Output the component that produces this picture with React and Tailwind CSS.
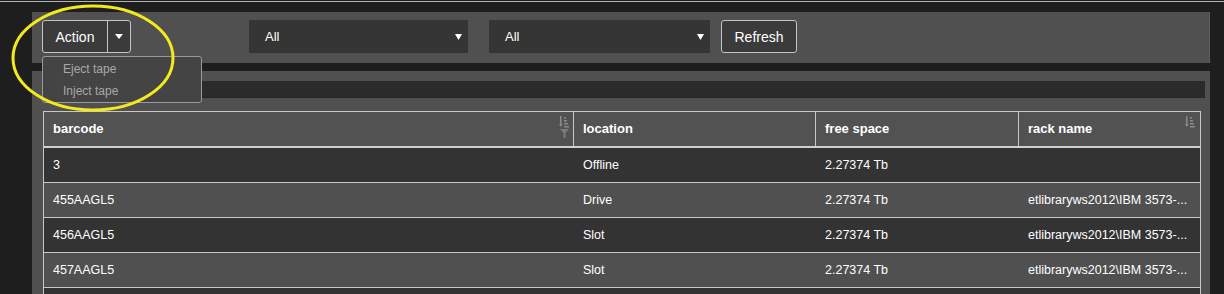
import React from "react";

const SortIcon = () => (
  <svg width="10" height="12" viewBox="0 0 10 12" className="block">
    <rect x="1" y="0" width="1.5" height="10" fill="#8a8a8a" />
    <path d="M0 8 L1.75 11 L3.5 8 Z" fill="#8a8a8a" />
    <rect x="5" y="1" width="2" height="1.5" fill="#8a8a8a" />
    <rect x="5" y="4" width="3" height="1.5" fill="#8a8a8a" />
    <rect x="5" y="7" width="4" height="1.5" fill="#8a8a8a" />
    <rect x="5" y="10" width="5" height="1.5" fill="#8a8a8a" />
  </svg>
);

const FilterIcon = () => (
  <svg width="9" height="9" viewBox="0 0 9 9" className="block">
    <path d="M0 0 H9 L5.5 4 V9 H3.5 V4 Z" fill="#7a7a7a" />
  </svg>
);

const Caret = () => (
  <svg width="8" height="5" viewBox="0 0 8 5" className="block">
    <path d="M0 0 H8 L4 5 Z" fill="#ffffff" />
  </svg>
);

const rows = [
  { b: "3", l: "Offline", f: "2.27374 Tb", r: "", dark: true },
  { b: "455AAGL5", l: "Drive", f: "2.27374 Tb", r: "etlibraryws2012\\IBM 3573-...", dark: false },
  { b: "456AAGL5", l: "Slot", f: "2.27374 Tb", r: "etlibraryws2012\\IBM 3573-...", dark: true },
  { b: "457AAGL5", l: "Slot", f: "2.27374 Tb", r: "etlibraryws2012\\IBM 3573-...", dark: false },
  { b: "", l: "", f: "", r: "", dark: true },
];

export default function App() {
  return (
    <div
      className="relative w-[1224px] h-[294px] overflow-hidden bg-[#1e1e1e]"
      style={{ fontFamily: '"Liberation Sans", Arial, sans-serif' }}
    >
      <div className="h-[1px]" />
      <div className="h-[1px] bg-[#b4b4b4]" />
      <div className="pl-[32px] pt-[10px] pr-[14px] flex flex-col gap-[8px]">
        {/* Toolbar */}
        <div className="h-[51px] bg-[#505050] border-r border-[#5c5c5c] flex items-start pt-[8px] pl-[10px]">
          <div className="flex h-[33px] w-[89px] rounded-[3px] border border-[#c4c4c4] bg-[#3b3b3b]">
            <div className="w-[64px] flex items-center justify-center pt-[1px] text-white text-[14px]">Action</div>
            <div className="flex-1 border-l border-[#c4c4c4] flex items-center justify-center">
              <Caret />
            </div>
          </div>
          <div className="ml-[118px] w-[219px] h-[33px] bg-[#353535] flex items-center pl-[16px] pr-[6px] text-white text-[13px]">
            <span className="flex-1">All</span>
            <svg width="7" height="6" viewBox="0 0 7 6"><path d="M0 0 H7 L3.5 6 Z" fill="#fff" /></svg>
          </div>
          <div className="ml-[21px] w-[221px] h-[33px] bg-[#353535] flex items-center pl-[16px] pr-[6px] text-white text-[13px]">
            <span className="flex-1">All</span>
            <svg width="7" height="6" viewBox="0 0 7 6"><path d="M0 0 H7 L3.5 6 Z" fill="#fff" /></svg>
          </div>
          <div className="ml-[11px] w-[76px] h-[33px] rounded-[3px] border border-[#c4c4c4] bg-[#3b3b3b] flex items-center justify-center pt-[1px] text-white text-[14px]">
            Refresh
          </div>
        </div>

        {/* Content panel */}
        <div className="h-[230px] bg-[#505050] pt-[10px] pl-[10px] pr-[5px]">
          <div className="h-[17px] bg-[#2b2b2b] border-b border-[#262626]" />
          <div className="mt-[13px] ml-[1px] w-[1158px] border-l border-r border-[#c8c8c8]">
            {/* header */}
            <div className="grid grid-cols-[530px_242px_203px_181px] h-[37px] bg-[#525252] border-t border-[#c8c8c8] border-b-2 border-b-[#d0d0d0] text-white text-[13px] font-bold">
              <div className="relative flex items-center pl-[9px] border-r border-[#c8c8c8]">
                barcode
                <div className="absolute right-[4px] top-[4px] flex flex-col items-center gap-[1px]">
                  <SortIcon />
                  <FilterIcon />
                </div>
              </div>
              <div className="flex items-center pl-[9px] border-r border-[#c8c8c8]">location</div>
              <div className="flex items-center pl-[9px] border-r border-[#c8c8c8]">free space</div>
              <div className="relative flex items-center pl-[9px]">
                rack name
                <div className="absolute right-[5px] top-[4px]">
                  <SortIcon />
                </div>
              </div>
            </div>
            {rows.map((r, i) => (
              <div
                key={i}
                className={
                  "grid grid-cols-[530px_242px_203px_181px] h-[35px] border-b border-[#c8c8c8] text-white text-[12.5px] " +
                  (r.dark ? "bg-[#333333]" : "bg-[#505050]")
                }
              >
                <div className="flex items-center pl-[9px] pt-[1px]">{r.b}</div>
                <div className="flex items-center pl-[9px] pt-[1px]">{r.l}</div>
                <div className="flex items-center pl-[9px] pt-[1px]">{r.f}</div>
                <div className="flex items-center pl-[9px] pt-[1px] whitespace-nowrap overflow-hidden">{r.r}</div>
              </div>
            ))}
          </div>
        </div>
      </div>

      {/* Dropdown menu */}
      <div className="absolute left-[42px] top-[56px] w-[160px] h-[47px] rounded-[3px] border border-[#9a9a9a] bg-[#444444] flex flex-col pl-[20px] pt-[1px] text-[#a8a8a8] text-[12px]">
        <div className="h-[23px] flex items-center">Eject tape</div>
        <div className="h-[23px] flex items-center">Inject tape</div>
      </div>

      {/* Yellow annotation ellipse */}
      <svg className="absolute left-0 top-0 pointer-events-none" width="220" height="130">
        <ellipse cx="93" cy="58" rx="80" ry="52" fill="none" stroke="#f2ea1c" strokeWidth="3" />
      </svg>
    </div>
  );
}
